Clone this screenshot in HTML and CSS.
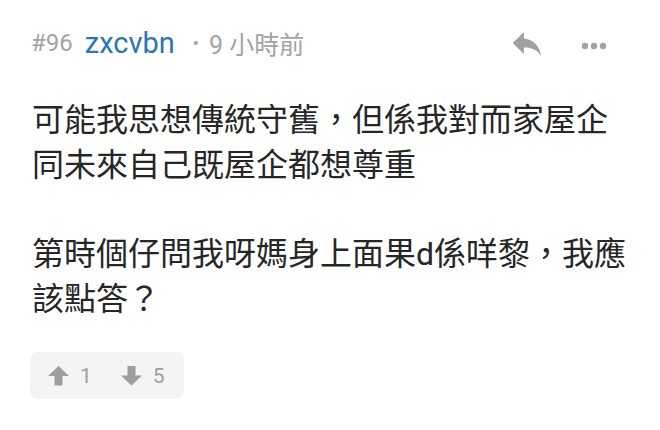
FILE: index.html
```html
<!DOCTYPE html>
<html lang="zh-Hant">
<head>
<meta charset="utf-8">
<link rel="stylesheet" href="styles.css">
</head>
<body>
<div class="post">
  <div class="header">
    <span class="num">#96</span>
    <span class="user">zxcvbn</span>
    <span class="sep">•</span>
    <span class="time">9 小時前</span>
    <div class="actions">
      <svg class="reply" width="38" height="38" viewBox="0 0 24 24"><path d="M10 9V5l-7 7 7 7v-4.1c5 0 8.5 1.6 11 5.1-1-5-4-10-11-11z" fill="#a0a0a0"/></svg>
      <svg class="more" width="26" height="8" viewBox="0 0 26 8"><circle cx="4" cy="4" r="3.2" fill="#a3a3a3"/><circle cx="13" cy="4" r="3.2" fill="#a3a3a3"/><circle cx="22" cy="4" r="3.2" fill="#a3a3a3"/></svg>
    </div>
  </div>
  <div class="content">
    <p>可能我思想傳統守舊，但係我對而家屋企同未來自己既屋企都想尊重</p>
    <p>第時個仔問我呀媽身上面果d係咩黎，我應該點答？</p>
  </div>
  <div class="votes">
    <span class="vote">
      <svg width="21" height="20" viewBox="0 0 21 20"><polygon points="10.5,0 21,10 14.5,10 14.5,19.5 6.5,19.5 6.5,10 0,10" fill="#9e9e9e"/></svg>
      <span class="count">1</span>
    </span>
    <span class="vote">
      <svg width="21" height="20" viewBox="0 0 21 20"><polygon points="10.5,19.5 21,9.5 14.5,9.5 14.5,0 6.5,0 6.5,9.5 0,9.5" fill="#9e9e9e"/></svg>
      <span class="count">5</span>
    </span>
  </div>
</div>
</body>
</html>
```

FILE: styles.css
```css
html, body {
  margin: 0;
  padding: 0;
  background: #ffffff;
}
body {
  font-family: Roboto, "Noto Sans CJK SC", sans-serif;
}
.post {
  padding: 25px 0 0 31px;
}
.header {
  display: flex;
  align-items: center;
  height: 36px;
  font-size: 24px;
  color: #a3a3a3;
}
.num {
  color: #a3a3a3;
  margin-right: 12px;
}
.user {
  color: #2f76ae;
  font-size: 29px;
}
.sep {
  margin: 0 10px 0 18px;
  font-size: 18px;
}
.time {
  color: #a3a3a3;
  font-size: 25px;
}
.actions {
  margin-left: auto;
  margin-right: 53px;
  display: flex;
  align-items: center;
  gap: 35px;
}
.reply {
  display: block;
}
.more {
  display: block;
  margin-top: 5px;
}
.content {
  margin-top: 37px;
  margin-left: 1px;
  width: 600px;
  font-size: 32px;
  line-height: 45px;
  color: #262626;
}
.content p {
  margin: 0;
}
.content p + p {
  margin-top: 44px;
}
.votes {
  margin-top: 30px;
  display: inline-flex;
  align-items: center;
  gap: 29px;
  height: 47px;
  padding: 0 19px 0 18px;
  margin-left: -1px;
  background: #f4f4f4;
  border-radius: 8px;
}
.vote {
  display: flex;
  align-items: center;
  gap: 11px;
}
.vote svg {
  display: block;
}
.count {
  font-size: 21px;
  color: #9e9e9e;
}
```
